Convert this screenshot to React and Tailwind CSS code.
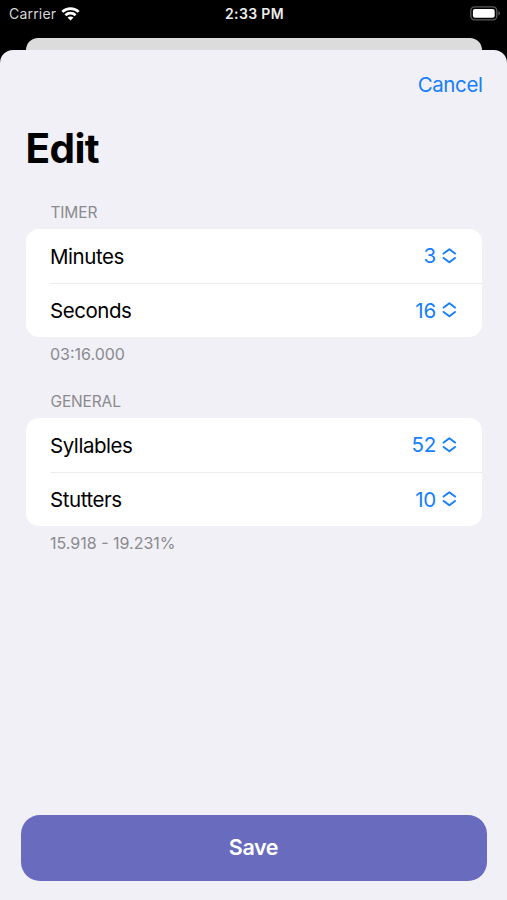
import React from 'react';

const sections = [
  {
    title: 'TIMER',
    footer: '03:16.000',
    rows: [
      { label: 'Minutes', value: 3 },
      { label: 'Seconds', value: 16 }
    ]
  },
  {
    title: 'GENERAL',
    footer: '15.918 - 19.231%',
    rows: [
      { label: 'Syllables', value: 52 },
      { label: 'Stutters', value: 10 }
    ]
  }
];

const WifiIcon = () => (
  <svg width="19" height="14" viewBox="0 0 19 14" fill="none" stroke="white" strokeWidth="2.7">
    <path d="M1.3 4.9C5.8 0.5 13.2 0.5 17.7 4.9" />
    <path d="M4.4 8.2C7.2 5.5 11.8 5.5 14.6 8.2" />
    <path d="M9.5 13.5L6.5 10.5C8.2 9 10.8 9 12.5 10.5Z" fill="white" stroke="none" />
  </svg>
);

const BatteryIcon = () => (
  <svg width="31" height="15" viewBox="0 0 31 15" fill="none">
    <rect x="0.8" y="0.8" width="26" height="13" rx="3.8" stroke="#5c5c5e" strokeWidth="1.3" />
    <rect x="2.9" y="2.9" width="21.8" height="8.8" rx="2" fill="white" />
    <path d="M28.4 5.2C30.5 5.9 30.5 8.7 28.4 9.4Z" fill="#5c5c5e" />
  </svg>
);

const ChevronUpDown = () => (
  <svg
    width="14"
    height="16"
    viewBox="0 0 14 16"
    fill="none"
    stroke="currentColor"
    strokeWidth="1.9"
    strokeLinecap="round"
    strokeLinejoin="round"
  >
    <path d="M1.6 5.6L7.4 1.3L13 5.6" />
    <path d="M1.6 9.9L7.4 14.3L13 9.9" />
  </svg>
);

const StatusBar = () => (
  <div className="grid grid-cols-3 items-center h-[27px] pl-[9px] pr-[6px] text-white">
    <div className="flex items-center gap-[5px]">
      <span className="text-[14px] tracking-[0.2px] text-[#d6d6d6]">Carrier</span>
      <WifiIcon />
    </div>
    <span className="pr-[1px] text-center text-[14px] font-semibold tracking-[0.35px] text-[#ececec]">2:33 PM</span>
    <div className="flex justify-end">
      <BatteryIcon />
    </div>
  </div>
);

const Section = ({ title, footer, rows }) => (
  <section className="h-[189px]">
    <h2 className="h-[28px] pl-[25px] text-[15.5px] leading-[24px] tracking-[-0.15px] text-[#8a8a8e]">{title}</h2>
    <div className="rounded-[13px] bg-white">
      {rows.map((row, index) => (
        <div key={row.label} className="pl-[24.5px]">
          <div
            className={`flex items-center justify-between h-[53.75px] pr-[26px] text-[20.5px] ${
              index > 0 ? 'border-t border-[#ececef]' : ''
            }`}
          >
            <span className="pt-[2px] tracking-[-0.45px] text-black">{row.label}</span>
            <button className="flex items-center gap-[5.5px] tracking-[-0.2px] text-[#157efb]">
              <span className="pt-[1.5px]">{row.value}</span>
              <ChevronUpDown />
            </button>
          </div>
        </div>
      ))}
    </div>
    <p className="pt-[6px] pl-[24.5px] text-[16px] leading-[22px] text-[#8a8a8e]">{footer}</p>
  </section>
);

const App = () => {
  return (
    <div className="flex flex-col h-[900px] bg-black font-[Inter,sans-serif]">
      <StatusBar />

      {/* Card behind the sheet */}
      <div className="mt-[11px] mx-[25.5px] h-[12px] rounded-t-[12px] bg-[#dddcdc]" />

      {/* Sheet */}
      <div className="flex flex-col flex-1 rounded-t-[13px] bg-[#f1f0f6]">
        <div className="flex justify-end h-[70px] pt-[20px] pr-[24.5px]">
          <button className="h-[30px] text-[20.5px] leading-[30px] tracking-[-0.4px] text-[#157efb]">Cancel</button>
        </div>
        <h1 className="h-[81px] pl-[25.5px] text-[40.5px] leading-[58px] font-bold tracking-[-0.6px] text-black">Edit</h1>

        <div className="px-[25.5px]">
          {sections.map((section) => (
            <Section key={section.title} {...section} />
          ))}
        </div>

        <div className="mt-auto px-[20.5px] pb-[19.5px]">
          <button className="w-full h-[65.5px] rounded-[19px] bg-[#696bbf] pb-[1px] text-[21.5px] font-semibold tracking-[-0.4px] text-white">
            Save
          </button>
        </div>
      </div>
    </div>
  );
};

export default App;
